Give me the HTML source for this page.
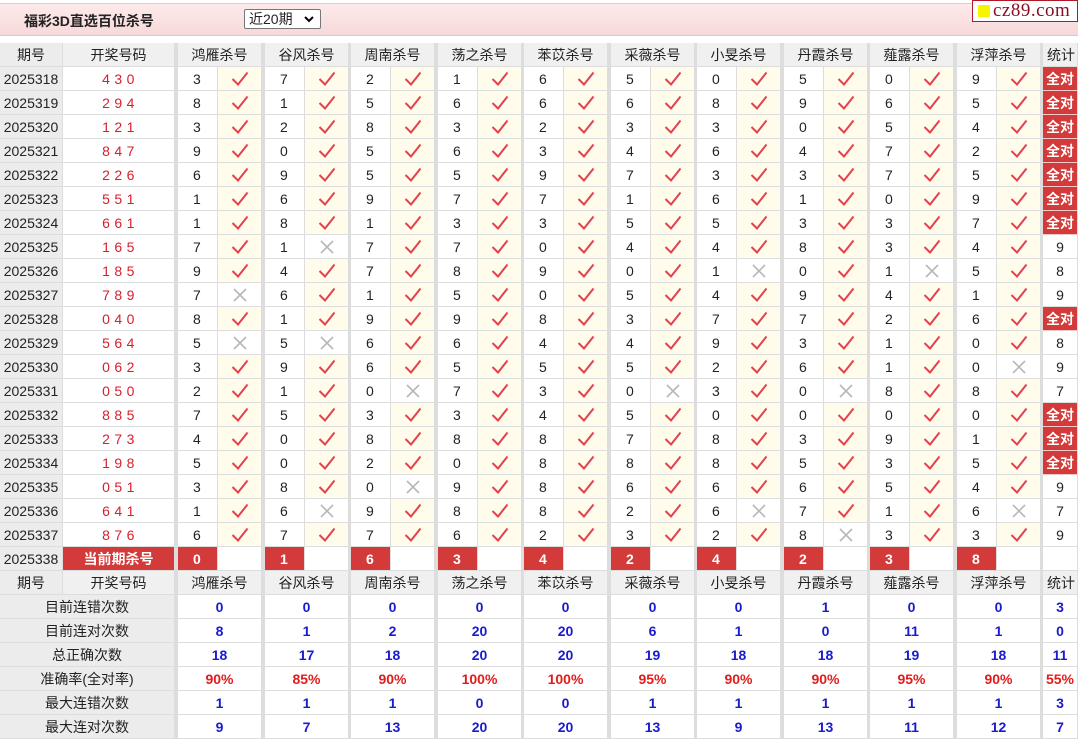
<!DOCTYPE html>
<html><head><meta charset="utf-8">
<style>
body{margin:0;width:1078px;height:739px;overflow:hidden;background:#fff;font-family:"Liberation Sans","Noto Sans CJK SC",sans-serif;font-size:14px;color:#222;position:relative}
.c{position:absolute;box-sizing:border-box;display:flex;align-items:center;justify-content:center;border-right:1px solid #ddd;border-bottom:1px solid #ddd;white-space:nowrap}
.sep{position:absolute;background:#ddd;width:3px}
#title{position:absolute;left:0;top:3px;width:1078px;height:33px;background:linear-gradient(#fdeaea,#f7d9da);border-top:1px solid #e6caca;border-bottom:1px solid #e2c5c5;box-sizing:border-box}
</style></head><body>
<div id="title">
<div style="position:absolute;left:24px;top:7px;font-weight:bold;font-size:14px">福彩3D直选百位杀号</div>
<div style="position:absolute;left:244px;top:5px;width:77px;height:20px;border:1px solid #777;border-radius:2px;background:#fff;box-sizing:border-box;font-size:14px;line-height:18px;padding-left:4px">近20期 <svg style="position:absolute;right:6px;top:6px" width="10" height="7" viewBox="0 0 10 7"><path d="M1 1L5 5L9 1" fill="none" stroke="#000" stroke-width="2"/></svg></div>
</div>
<div style="position:absolute;left:972px;top:0;width:106px;height:22px;border:1px solid #b0182a;background:#fff;box-sizing:border-box">
<div style="position:absolute;left:5px;top:4px;width:12px;height:12px;background:#f5f500"></div>
<div style="position:absolute;left:20px;top:-1px;font-family:'Liberation Serif',serif;font-size:19px;color:#8a0f22;letter-spacing:0.5px">cz89.com</div>
</div>
<div id="g"></div>
<script>
var g=document.getElementById('g'),h='';
function cell(x,y,w,hh,txt,st){h+='<div class="c" style="left:'+x+'px;top:'+y+'px;width:'+w+'px;height:'+hh+'px;'+(st||'')+'">'+txt+'</div>';}
var ok='<svg width="20" height="18" viewBox="0 0 20 18"><path d="M2.5 9 L8 14.5 L17.5 2.5" fill="none" stroke="#e4404f" stroke-width="2"/></svg>';
var no='<svg width="16" height="16" viewBox="0 0 16 16"><path d="M2 2L14 14M14 2L2 14" stroke="#b8b8b8" stroke-width="1.6"/></svg>';
var gx=[];for(var i=0;i<10;i++)gx.push(Math.round(178+i*86.5));
var names=['鸿雁杀号','谷风杀号','周南杀号','荡之杀号','苯苡杀号','采薇杀号','小旻杀号','丹霞杀号','薤露杀号','浮萍杀号'];
function header(y){
 cell(0,y,63,24,'期号','background:#ececec');
 cell(63,y,112,24,'开奖号码','background:#f0f0f0');
 for(var i=0;i<10;i++)cell(gx[i],y,84,24,names[i],'background:#f0f0f0');
 cell(1043,y,35,24,'统计','background:#f0f0f0;justify-content:flex-start;padding-left:4px');
}
header(43);
var codes=['430','294','121','847','226','551','661','165','185','789','040','564','062','050','885','273','198','051','641','876'];
var rows=[
'3 7 2 1 6 5 0 5 0 9|A','8 1 5 6 6 6 8 9 6 5|A','3 2 8 3 2 3 3 0 5 4|A','9 0 5 6 3 4 6 4 7 2|A','6 9 5 5 9 7 3 3 7 5|A',
'1 6 9 7 7 1 6 1 0 9|A','1 8 1 3 3 5 5 3 3 7|A','7 1x 7 7 0 4 4 8 3 4|9','9 4 7 8 9 0 1x 0 1x 5|8','7x 6 1 5 0 5 4 9 4 1|9',
'8 1 9 9 8 3 7 7 2 6|A','5x 5x 6 6 4 4 9 3 1 0|8','3 9 6 5 5 5 2 6 1 0x|9','2 1 0x 7 3 0x 3 0x 8 8|7','7 5 3 3 4 5 0 0 0 0|A',
'4 0 8 8 8 7 8 3 9 1|A','5 0 2 0 8 8 8 5 3 5|A','3 8 0x 9 8 6 6 6 5 4|9','1 6x 9 8 8 2 6x 7 1 6x|7','6 7 7 6 2 3 2 8x 3 3|9'];
for(var r=0;r<20;r++){
 var y=67+r*24,p=rows[r].split('|'),v=p[0].split(' ');
 cell(0,y,63,24,'20253'+(18+r),'background:#ececec');
 cell(63,y,112,24,codes[r],'color:#d81e2c;letter-spacing:4.5px;padding-left:4px');
 for(var i=0;i<10;i++){var x=v[i].indexOf('x')>=0;
  cell(gx[i],y,40,24,v[i].replace('x',''),'justify-content:flex-start;padding-left:15px');
  cell(gx[i]+40,y,44,24,x?no:ok,x?'':'background:#fffcec');}
 if(p[1]=='A')cell(1043,y,35,24,'全对','background:#d33a3a;color:#fff;font-weight:bold;border-bottom:1px solid #f3c9c9');
 else cell(1043,y,35,24,p[1],'');
}
var y=547,k=[0,1,6,3,4,2,4,2,3,8];
cell(0,y,63,24,'2025338','background:#ececec');
cell(63,y,112,24,'当前期杀号','background:#d33a3a;color:#fff;font-weight:bold');
for(var i=0;i<10;i++){cell(gx[i],y,40,24,k[i],'background:#d33a3a;color:#fff;font-weight:bold;justify-content:flex-start;padding-left:15px');cell(gx[i]+40,y,44,24,'','');}
cell(1043,y,35,24,'','');
header(571);
var st=[['目前连错次数','0 0 0 0 0 0 0 1 0 0 3'],['目前连对次数','8 1 2 20 20 6 1 0 11 1 0'],['总正确次数','18 17 18 20 20 19 18 18 19 18 11'],
['准确率(全对率)','90% 85% 90% 100% 100% 95% 90% 90% 95% 90% 55%'],['最大连错次数','1 1 1 0 0 1 1 1 1 1 3'],['最大连对次数','9 7 13 20 20 13 9 13 11 12 7']];
for(var s=0;s<6;s++){var y=595+s*24,v=st[s][1].split(' '),col=s==3?'#e31b1b':'#1a1ad0';
 cell(0,y,175,24,st[s][0],'background:#ececec');
 for(var i=0;i<10;i++)cell(gx[i],y,84,24,v[i],'color:'+col+';font-weight:bold');
 cell(1043,y,35,24,v[10],'color:'+col+';font-weight:bold');}
for(var i=0;i<10;i++)h+='<div class="sep" style="left:'+(gx[i]-3)+'px;top:43px;height:696px"></div>';
h+='<div class="sep" style="left:1040px;top:43px;height:696px"></div>';
g.innerHTML=h;
</script>
</body></html>
